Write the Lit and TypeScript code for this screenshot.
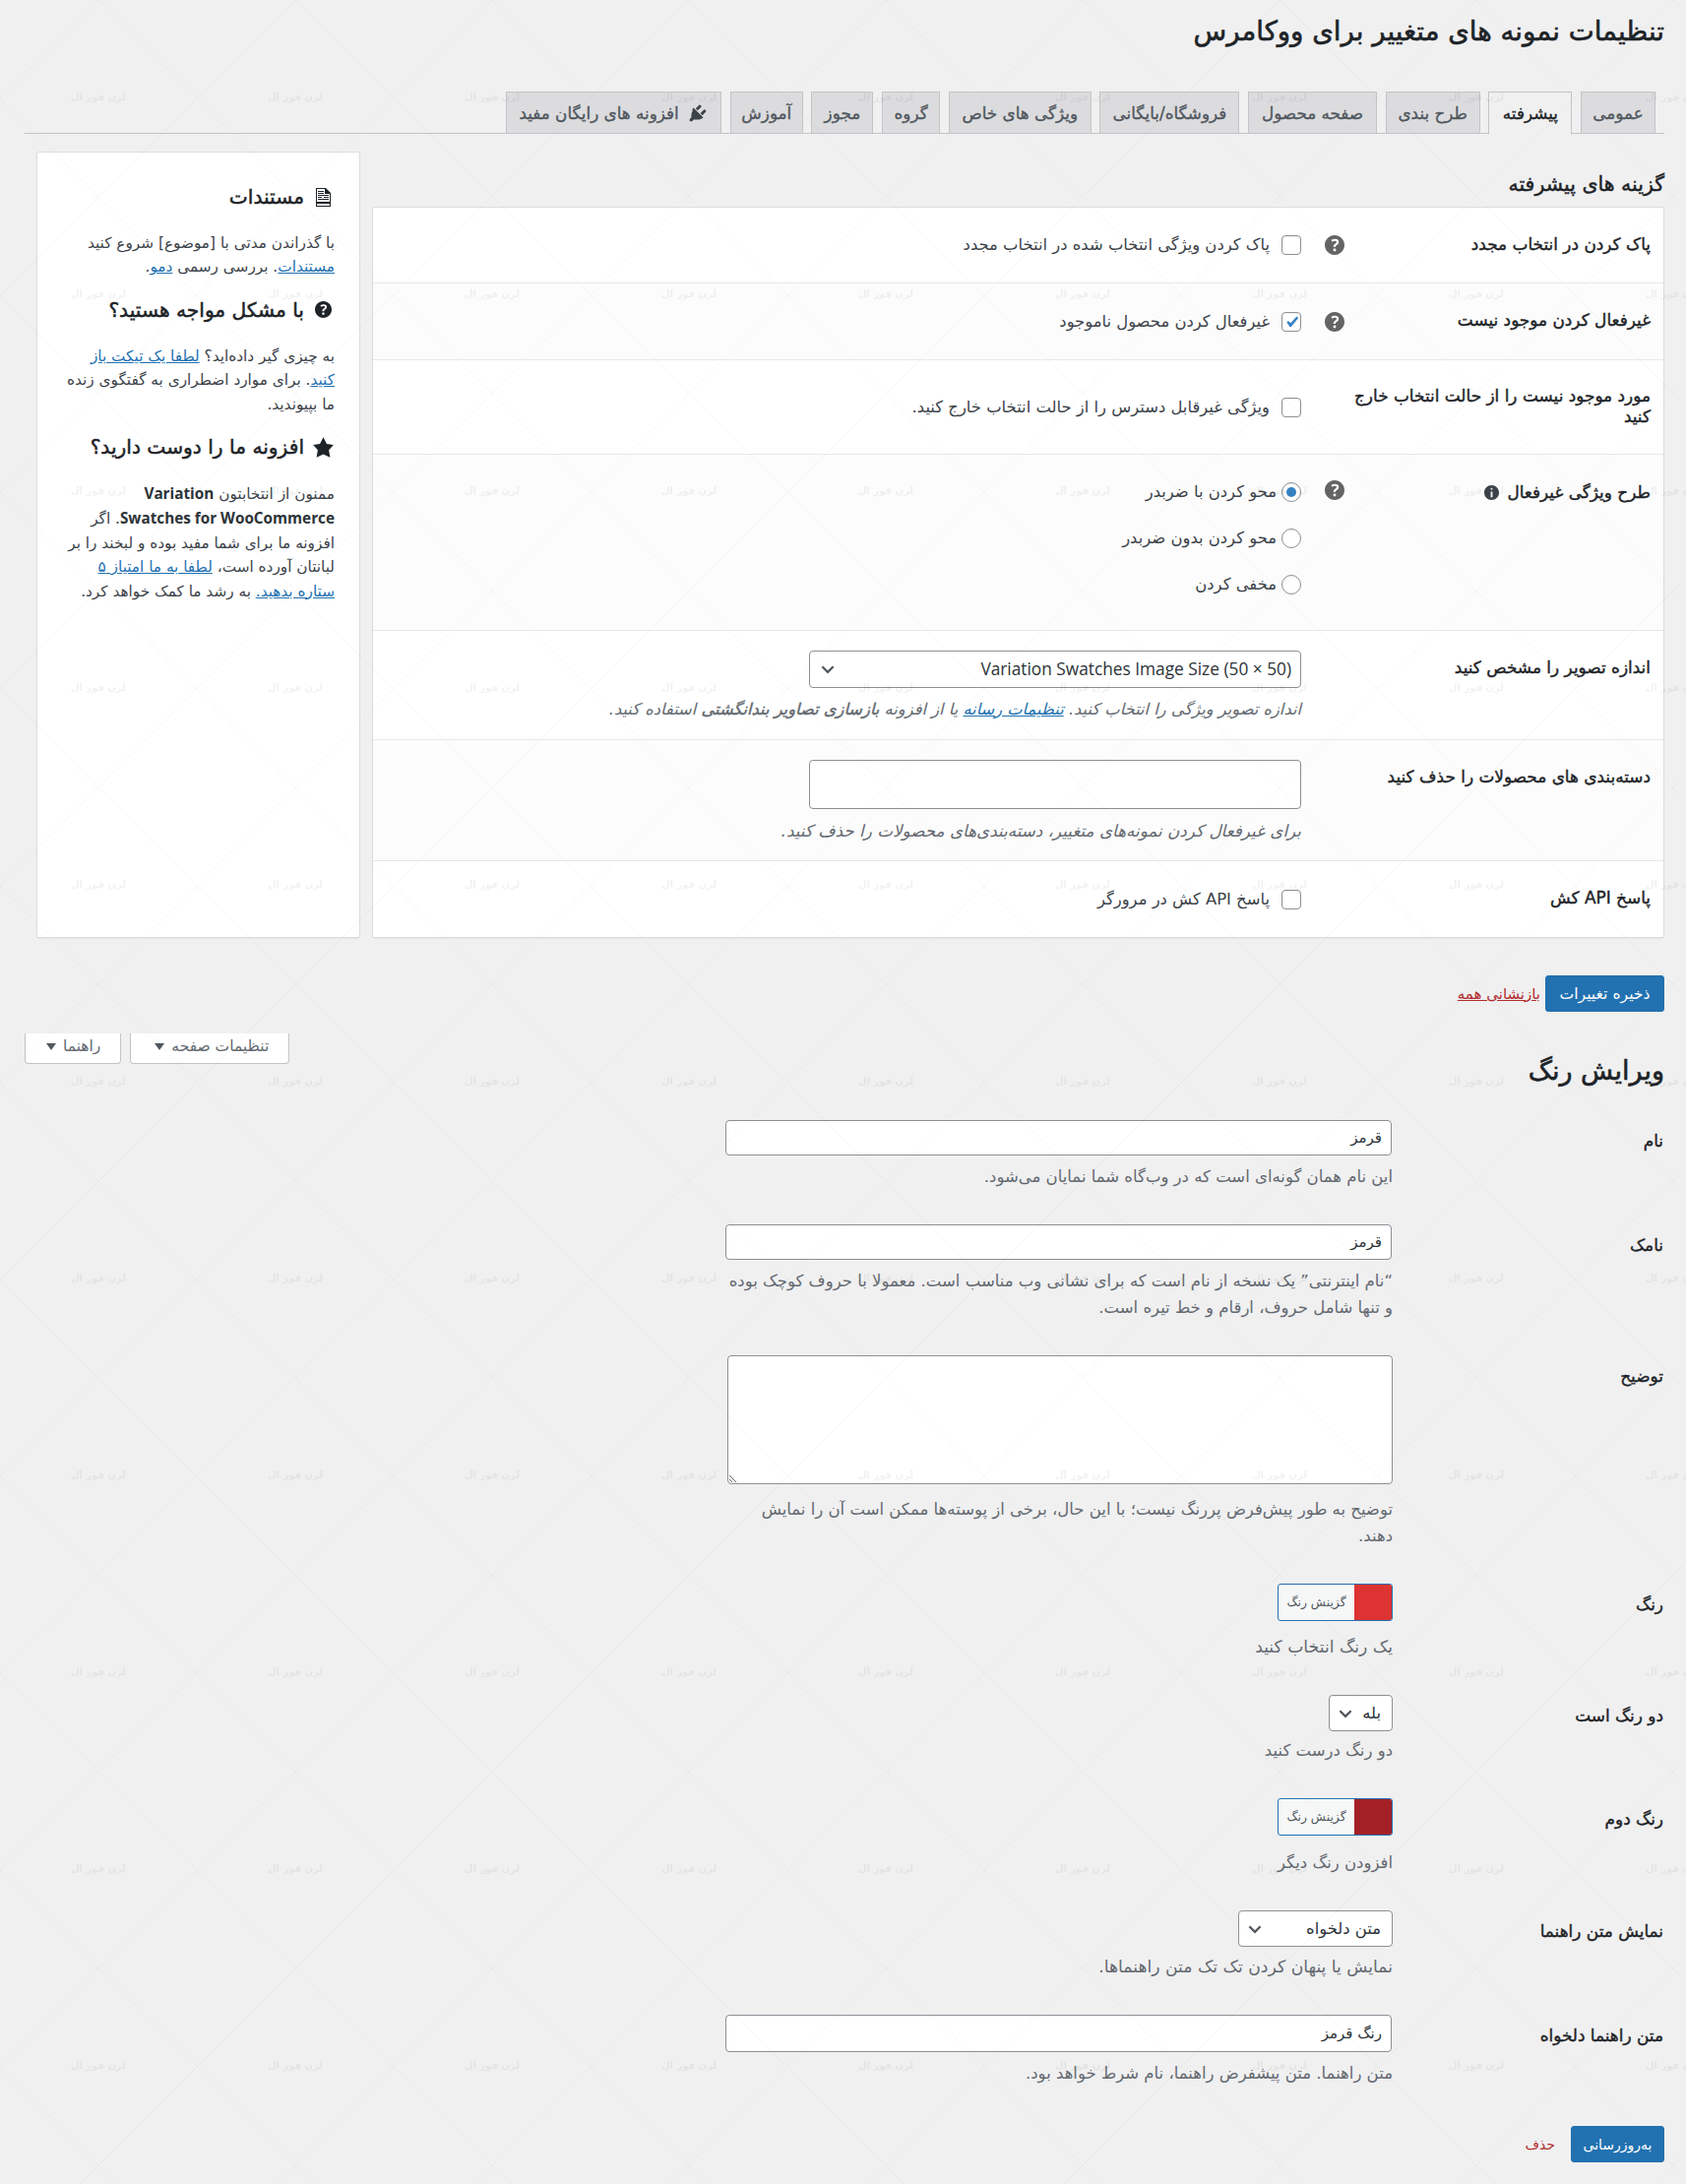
import { LitElement, html, css } from "lit";
import { customElement } from "lit/decorators.js";
import { styleMap } from "lit/directives/style-map.js";

const HELP_D = "M17 10c0-3.87-3.14-7-7-7-3.87 0-7 3.13-7 7s3.13 7 7 7c3.86 0 7-3.13 7-7zm-6.3 1.48H9.14v-.43c0-.38.08-.7.24-.98s.46-.57.88-.89c.41-.29.68-.53.81-.71.14-.18.2-.39.2-.62 0-.25-.09-.44-.28-.58-.19-.13-.45-.19-.79-.19-.58 0-1.25.19-2 .57l-.64-1.28c.87-.49 1.8-.74 2.77-.74.81 0 1.45.2 1.92.58.48.39.71.91.71 1.55 0 .43-.09.8-.29 1.11-.19.32-.57.67-1.11 1.06-.38.28-.61.49-.71.63-.1.15-.15.34-.15.57v.35zm-1.47 2.74c-.18-.17-.27-.42-.27-.73 0-.33.08-.58.26-.75s.43-.25.77-.25c.32 0 .57.09.75.26s.27.42.27.74c0 .3-.09.55-.27.72-.18.18-.43.27-.75.27-.33 0-.58-.09-.76-.26z";
const PLUG_D = "M13.11 4.36L9.87 7.6 8 5.73l3.24-3.24c.35-.34 1.05-.2 1.56.32.52.51.66 1.21.31 1.55zm-8 1.77l.91-1.12 9.01 9.01-1.19.84c-.71.71-2.63 1.16-3.82 1.16H6.14L4.9 17.26c-.59.59-1.54.59-2.12 0-.59-.58-.59-1.53 0-2.12l1.24-1.24v-1.88c0-1.19.45-3.11 1.09-3.89zm7.26 3.97l3.24-3.24c.34-.35 1.04-.21 1.55.31.52.51.66 1.21.31 1.55l-3.24 3.25z";
const INFO_D = "M10 2c4.42 0 8 3.58 8 8s-3.58 8-8 8-8-3.58-8-8 3.58-8 8-8zm1 4c0-.55-.45-1-1-1s-1 .45-1 1 .45 1 1 1 1-.45 1-1zm0 9V9H9v6h2z";
const STAR_D = "m10 1 3 6 6 .75-4.12 4.62L16 19l-6-3-6 3 1.13-6.63L1 7.75 7 7z";

const TABS: [string, number][] = [["عمومی", 76], ["پیشرفته", 85], ["طرح بندی", 96], ["صفحه محصول", 131], ["فروشگاه/بایگانی", 142], ["ویژگی های خاص", 145], ["گروه", 59], ["مجوز", 63], ["آموزش", 74]];

const help = () => html`<svg class="help" viewBox="3 3 14 14" aria-hidden="true"><path d="${HELP_D}"></path></svg>`;
const chevron = () => html`<svg class="chev" viewBox="0 0 16 16" aria-hidden="true"><path d="M3 5.5 8 10.5l5-5" fill="none" stroke="#50575e" stroke-width="2"></path></svg>`;

@customElement("app-root")
export class AppRoot extends LitElement {
  static styles = css`
    :host { display: block; position: relative; min-height: 2219px; background: #f0f0f1; overflow: hidden; }
    * { box-sizing: border-box; }
    .page { padding: 0 22px 21px 25px; font: 16.4px/24px "DejaVu Sans", "Liberation Sans", sans-serif; color: #3c434a; }
    .wm { position: absolute; inset: 0; width: 100%; height: 100%; pointer-events: none; z-index: 5; }
    .wm text { font: bold 10px "DejaVu Sans", sans-serif; fill: rgba(0, 0, 0, .05); }
    h1 { margin: 0; font-size: 27.6px; font-weight: 400; -webkit-text-stroke: .6px currentColor; line-height: 30px; color: #1d2327; padding-top: 17px; height: 93px; }
    .tabs { display: flex; gap: 8.67px; border-bottom: 1px solid #c3c4c7; height: 43px; }
    .tab { height: 43px; background: #dcdcde; border: 1px solid #c3c4c7; font-size: 16.8px; -webkit-text-stroke: .35px currentColor; color: #50575e; white-space: nowrap; display: flex; align-items: center; justify-content: center; gap: 8px; }
    .tab:first-child { margin-right: 9px; }
    .tab.active { background: #f0f0f1; border-bottom-color: #f0f0f1; color: #1d2327; height: 44px; }
    .tab svg { width: 22px; height: 22px; fill: #3c434a; }
    .plug { width: 219px; }
    .layout { display: flex; gap: 12px; margin: 18px 0 0 12px; }
    .main { flex: 1; }
    h2 { margin: 0 0 8px; padding-top: 18px; font-size: 20.5px; -webkit-text-stroke: .45px currentColor; line-height: 30px; font-weight: 400; color: #1d2327; }
    .card { background: #fff; border: 1px solid #dcdcde; box-shadow: 0 1px 1px rgba(0, 0, 0, .04); border-radius: 2px; }
    .row { display: flex; border-bottom: 1px solid #e8e8ea; }
    .row:last-child { border-bottom: 0; }
    .row.alt { background: #fcfcfc; }
    .th { width: 309px; flex: none; padding: 0 13px 2px 0; font-size: 16.9px; -webkit-text-stroke: .4px currentColor; line-height: 21px; color: #1d2327; white-space: nowrap; }
    .tip { width: 59px; flex: none; padding-right: 15px; }
    .td { flex: 1; }
    .center { align-items: center; }
    .h77 { height: 77px; }
    .h78 { height: 78px; }
    .h96 { height: 96px; }
    .h179 { height: 179px; padding-top: 26px; }
    .h111 { height: 111px; padding-top: 20px; }
    .h123 { height: 123px; padding-top: 20px; }
    .pt2 { padding-top: 2px; }
    .pt7 { padding-top: 7px; }
    .help { display: block; width: 20px; height: 20px; fill: #646464; }
    .check { display: flex; align-items: center; gap: 12px; }
    .radios { display: flex; flex-direction: column; gap: 23px; }
    .radios .check { gap: 5px; }
    input[type="checkbox"], input[type="radio"] { appearance: none; -webkit-appearance: none; margin: 0; width: 20px; height: 20px; flex: none; border: 1px solid #8c8f94; background: #fff; border-radius: 4px; position: relative; box-shadow: inset 0 1px 2px rgba(0, 0, 0, .06); }
    input[type="radio"] { border-radius: 50%; }
    input[type="checkbox"]:checked::before { content: ""; position: absolute; inset: 0; background: #3582c4; clip-path: polygon(24% 55%, 33% 47%, 46% 60%, 80% 22%, 90% 31%, 48% 82%, 42% 82%); }
    input[type="radio"]:checked::before { content: ""; position: absolute; inset: 4px; border-radius: 50%; background: #3582c4; }
    .inf { display: inline-block; width: 15px; height: 15px; margin-right: 8px; vertical-align: -2px; fill: #3c434a; }
    .select { display: flex; align-items: center; justify-content: space-between; background: #fff; border: 1px solid #8c8f94; border-radius: 4px; color: #2c3338; padding: 0 9px 0 9px; }
    .chev { width: 18px; height: 18px; flex: none; }
    .sel500 { width: 500px; height: 38px; }
    .lat { font-family: "Open Sans", "DejaVu Sans", sans-serif; font-size: 17.3px; }
    .tinput { display: block; background: #fff; border: 1px solid #8c8f94; border-radius: 4px; color: #2c3338; padding: 0 9px; font: 15px "DejaVu Sans", sans-serif; outline: none; }
    .inp500 { width: 500px; height: 50px; }
    .note { margin: 9.5px 0 0; font-size: 16.8px; font-style: italic; color: #646970; white-space: nowrap; }
    .note.n1 { font-size: 16.3px; }
    .note b { font-weight: 400; -webkit-text-stroke: .4px currentColor; }
    a { color: #2271b1; }
    .side { width: 329px; flex: none; padding: 30px 25px 0 0; font-size: 15.3px; line-height: 24.4px; white-space: nowrap; }
    .side h3 { margin: 16px 0 20px; font-size: 20.2px; -webkit-text-stroke: .5px currentColor; line-height: 30px; font-weight: 400; color: #1d2327; display: flex; align-items: center; gap: 7px; }
    .side h3:first-child { margin-top: 0; }
    .side p { margin: 0; }
    .side b { font-family: "Open Sans", "DejaVu Sans", sans-serif; color: #2c3338; }
    .ic { width: 24px; flex: none; display: flex; justify-content: center; }
    .ic svg { flex: none; fill: #1d2327; }
    .actions { display: flex; align-items: center; gap: 5px; margin-top: 38px; height: 37px; }
    .btn { display: flex; align-items: center; justify-content: center; height: 37px; background: #2271b1; color: #fff; border-radius: 3px; font-size: 14px; border: 1px solid #2271b1; }
    .b121 { width: 121px; font-size: 15.6px; }
    .b94 { width: 95px; }
    .reset { color: #b32d2e; font-size: 15px; }
    .head2 { display: flex; justify-content: space-between; align-items: flex-start; margin-top: 22px; height: 60px; }
    .head2 h1 { height: auto; padding: 18px 0 0; line-height: 40px; font-size: 27px; }
    .meta { display: flex; gap: 9px; flex-direction: row-reverse; }
    .mbtn { display: flex; align-items: center; gap: 7px; height: 31px; padding: 0 20px 4px 21px; background: #fff; border: 1px solid #c3c4c7; border-top: 0; border-radius: 0 0 4px 4px; color: #646970; font-size: 15.5px; }
    .mbtn.wide { padding-left: 24px; }
    .tri { width: 0; height: 0; border: 5px solid transparent; border-top: 7px solid #50575e; border-bottom: 0; }
    form { margin-top: 28px; }
    .frow { display: flex; padding-bottom: 35px; }
    .fth { width: 276px; flex: none; padding: 9px 1px 0 0; font-size: 16.9px; -webkit-text-stroke: .4px currentColor; line-height: 24px; color: #1d2327; }
    .ftd { width: 678px; flex: none; }
    .w677 { width: 677px; margin-right: 1px; }
    .h36 { height: 36px; }
    .h38 { height: 38px; }
    textarea { display: block; width: 676px; height: 131px; background: #fff; border: 1px solid #8c8f94; border-radius: 4px; outline: none; }
    .d { margin: 0; color: #646970; font-size: 16.5px; line-height: 27px; white-space: nowrap; }
    .d.big { font-size: 17.2px; }
    .m6 { margin-top: 6px; }
    .m7 { margin-top: 7px; }
    .m8 { margin-top: 8px; }
    .m12 { margin-top: 12px; }
    .m13 { margin-top: 13px; }
    .m14 { margin-top: 14px; }
    .picker { display: flex; width: 117px; height: 38px; border: 1px solid #2271b1; border-radius: 3px; overflow: hidden; background: #f6f7f7; }
    .swatch { width: 38px; flex: none; }
    .red { background: #dd3333; }
    .dark { background: #a32126; }
    .pick { flex: 1; text-align: center; font-size: 12.4px; line-height: 36px; color: #50575e; }
    .sel65 { width: 65px; height: 37px; padding: 0 11px 0 7px; }
    .sel157 { width: 157px; height: 37px; padding: 0 11px 0 7px; }
    .foot { display: flex; align-items: center; gap: 16px; margin-top: 5px; }
    .del { color: #b32d2e; font-size: 14px; text-decoration: none; }
  `;

  render() {
    return html`
      <svg class="wm" aria-hidden="true">
        <defs>
          <pattern id="wm" width="200" height="200" patternUnits="userSpaceOnUse">
            <path d="M100 0 200 100 100 200 0 100z" fill="none" stroke="rgba(0,0,0,.028)" stroke-width="1"></path>
            <text x="100" y="102" text-anchor="middle" direction="rtl">لرن فور ال</text>
          </pattern>
        </defs>
        <rect width="100%" height="100%" fill="url(#wm)"></rect>
      </svg>
      <div class="page" dir="rtl">
        <h1>تنظیمات نمونه های متغییر برای ووکامرس</h1>
        <nav class="tabs">
          ${TABS.map(([t, w], i) => html`<div class="tab ${i === 1 ? "active" : ""}" style=${styleMap({ width: w + "px" })}>${t}</div>`)}
          <div class="tab plug"><svg viewBox="0 0 20 20"><path d="${PLUG_D}"></path></svg>افزونه های رایگان مفید</div>
        </nav>
        <div class="layout">
          <section class="main">
            <h2>گزینه های پیشرفته</h2>
            <div class="card">
              <div class="row center h77">
                <div class="th">پاک کردن در انتخاب مجدد</div>
                <div class="tip">${help()}</div>
                <div class="td"><label class="check"><input type="checkbox" />پاک کردن ویژگی انتخاب شده در انتخاب مجدد</label></div>
              </div>
              <div class="row center alt h78">
                <div class="th">غیرفعال کردن موجود نیست</div>
                <div class="tip">${help()}</div>
                <div class="td"><label class="check"><input type="checkbox" checked />غیرفعال کردن محصول ناموجود</label></div>
              </div>
              <div class="row center h96">
                <div class="th">مورد موجود نیست را از حالت انتخاب خارج<br />کنید</div>
                <div class="tip"></div>
                <div class="td"><label class="check"><input type="checkbox" />ویژگی غیرقابل دسترس را از حالت انتخاب خارج کنید.</label></div>
              </div>
              <div class="row alt h179">
                <div class="th pt2">طرح ویژگی غیرفعال<svg class="inf" viewBox="2 2 16 16"><path d="${INFO_D}"></path></svg></div>
                <div class="tip">${help()}</div>
                <div class="td radios">
                  <label class="check"><input type="radio" name="d" checked />محو کردن با ضربدر</label>
                  <label class="check"><input type="radio" name="d" />محو کردن بدون ضربدر</label>
                  <label class="check"><input type="radio" name="d" />مخفی کردن</label>
                </div>
              </div>
              <div class="row h111">
                <div class="th pt7">اندازه تصویر را مشخص کنید</div>
                <div class="tip"></div>
                <div class="td">
                  <div class="select sel500"><span class="lat">Variation Swatches Image Size (50 × 50)</span>${chevron()}</div>
                  <p class="note n1">اندازه تصویر ویژگی را انتخاب کنید. <a href="#">تنظیمات رسانه</a> یا از افزونه <b>بازسازی تصاویر بندانگشتی</b> استفاده کنید.</p>
                </div>
              </div>
              <div class="row alt h123">
                <div class="th pt7">دسته‌بندی های محصولات را حذف کنید</div>
                <div class="tip"></div>
                <div class="td">
                  <input class="tinput inp500" type="text" />
                  <p class="note">برای غیرفعال کردن نمونه‌های متغییر، دسته‌بندی‌های محصولات را حذف کنید.</p>
                </div>
              </div>
              <div class="row center h77">
                <div class="th">پاسخ API کش</div>
                <div class="tip"></div>
                <div class="td"><label class="check"><input type="checkbox" />پاسخ API کش در مرورگر</label></div>
              </div>
            </div>
          </section>
          <aside class="card side">
            <h3><span class="ic"><svg width="15" height="19" viewBox="0 0 15 19"><path fill-rule="evenodd" d="M0 0h10l5 5v14H0zm1 1v13h13V6H9V1zm1 2h6v1H2zm0 2h6v1H2zm0 2h11v1H2zm0 2h4v1H2zm6 0h5v1H8zm-6 2h11v1H2zM1 16v2h13v-2z"></path></svg></span>مستندات</h3>
            <p>با گذراندن مدتی با [موضوع] شروع کنید<br /><a href="#">مستندات</a>. بررسی رسمی <a href="#">دمو</a>.</p>
            <h3><span class="ic"><svg width="17" height="17" viewBox="3 3 14 14"><path d="${HELP_D}"></path></svg></span>با مشکل مواجه هستید؟</h3>
            <p>به چیزی گیر داده‌اید؟ <a href="#">لطفا یک تیکت باز<br />کنید</a>. برای موارد اضطراری به گفتگوی زنده<br />ما بپیوندید.</p>
            <h3><span class="ic"><svg width="23" height="23" viewBox="0 0 20 20"><path d="${STAR_D}"></path></svg></span>افزونه ما را دوست دارید؟</h3>
            <p>ممنون از انتخابتون <b>Variation<br />Swatches for WooCommerce</b>. اگر<br />افزونه ما برای شما مفید بوده و لبخند را بر<br />لبانتان آورده است، <a href="#">لطفا به ما امتیاز ۵<br />ستاره بدهید.</a> به رشد ما کمک خواهد کرد.</p>
          </aside>
        </div>
        <div class="actions">
          <div class="btn b121">ذخیره تغییرات</div>
          <a class="reset" href="#">بازنشانی همه</a>
        </div>
        <div class="head2">
          <h1>ویرایش رنگ</h1>
          <div class="meta">
            <div class="mbtn">راهنما<span class="tri"></span></div>
            <div class="mbtn wide">تنظیمات صفحه<span class="tri"></span></div>
          </div>
        </div>
        <form>
          <div class="frow">
            <div class="fth">نام</div>
            <div class="ftd"><input class="tinput w677 h36" type="text" value="قرمز" /><p class="d m8">این نام همان گونه‌ای است که در وب‌گاه شما نمایان می‌شود.</p></div>
          </div>
          <div class="frow">
            <div class="fth">نامک</div>
            <div class="ftd"><input class="tinput w677 h36" type="text" value="قرمز" /><p class="d m8">“نام اینترنتی” یک نسخه از نام است که برای نشانی وب مناسب است. معمولا با حروف کوچک بوده<br />و تنها شامل حروف، ارقام و خط تیره است.</p></div>
          </div>
          <div class="frow">
            <div class="fth">توضیح</div>
            <div class="ftd"><textarea></textarea><p class="d m12">توضیح به طور پیش‌فرض پررنگ نیست؛ با این حال، برخی از پوسته‌ها ممکن است آن را نمایش<br />دهند.</p></div>
          </div>
          <div class="frow">
            <div class="fth">رنگ</div>
            <div class="ftd"><div class="picker"><span class="swatch red"></span><span class="pick">گزینش رنگ</span></div><p class="d big m13">یک رنگ انتخاب کنید</p></div>
          </div>
          <div class="frow">
            <div class="fth">دو رنگ است</div>
            <div class="ftd"><div class="select sel65"><span>بله</span>${chevron()}</div><p class="d m6">دو رنگ درست کنید</p></div>
          </div>
          <div class="frow">
            <div class="fth">رنگ دوم</div>
            <div class="ftd"><div class="picker"><span class="swatch dark"></span><span class="pick">گزینش رنگ</span></div><p class="d m14">افزودن رنگ دیگر</p></div>
          </div>
          <div class="frow">
            <div class="fth">نمایش متن راهنما</div>
            <div class="ftd"><div class="select sel157"><span>متن دلخواه</span>${chevron()}</div><p class="d big m7">نمایش یا پنهان کردن تک تک متن راهنماها.</p></div>
          </div>
          <div class="frow">
            <div class="fth">متن راهنما دلخواه</div>
            <div class="ftd"><input class="tinput w677 h38" type="text" value="رنگ قرمز" /><p class="d m8">متن راهنما. متن پیشفرض راهنما، نام شرط خواهد بود.</p></div>
          </div>
          <div class="foot">
            <div class="btn b94">به‌روزرسانی</div>
            <a class="del" href="#">حذف</a>
          </div>
        </form>
      </div>
    `;
  }
}
